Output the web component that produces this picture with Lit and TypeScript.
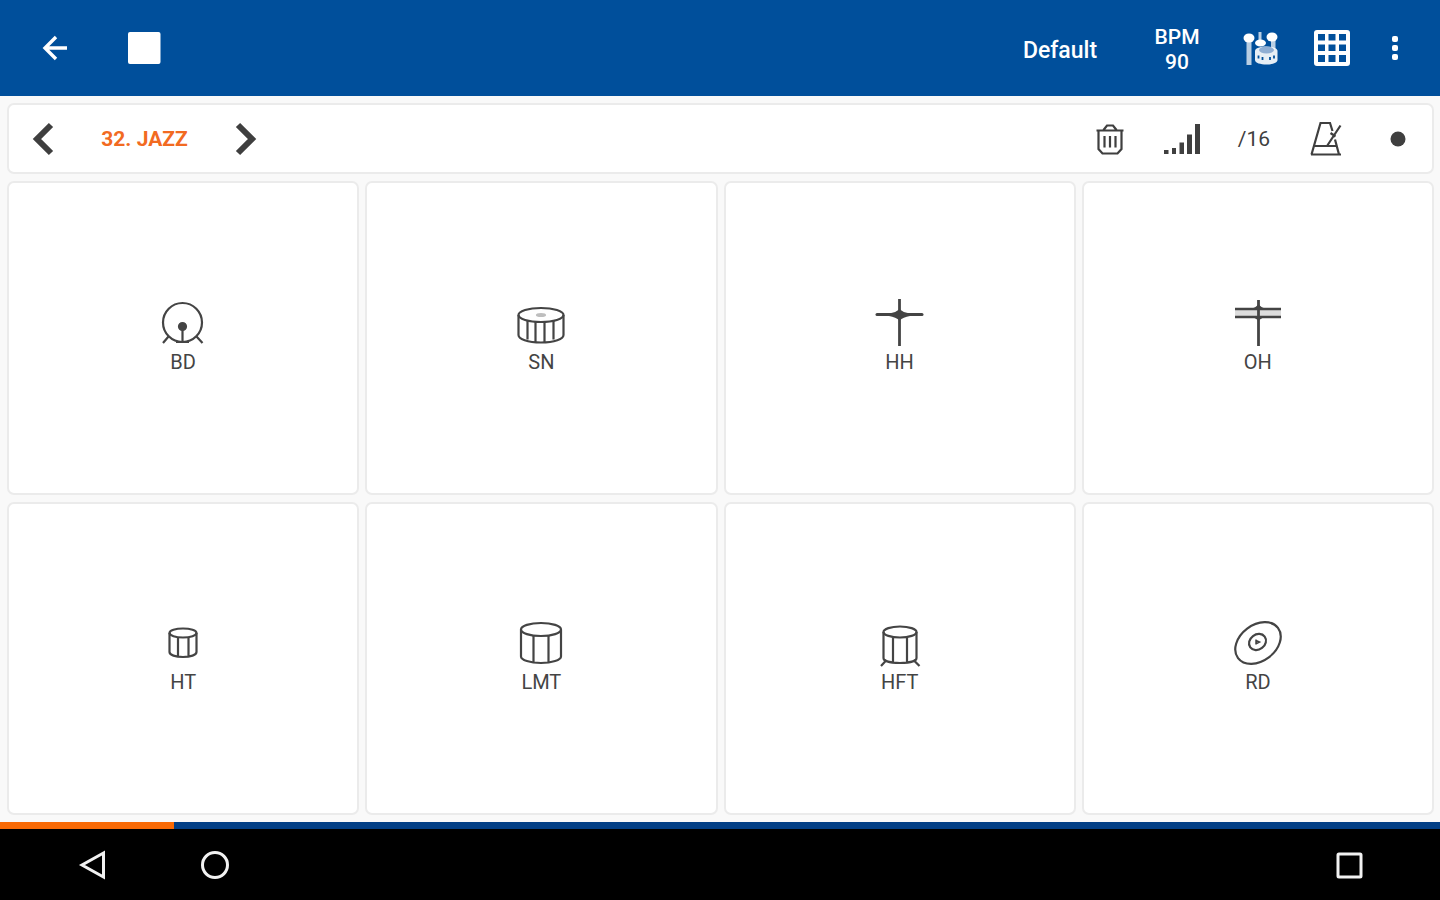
import { LitElement, html, svg, css } from "lit";
import { customElement, property, state } from "lit/decorators.js";

// Line drawings for the pads, each on a 48 x 48 canvas.
const drums: Record<string, unknown> = {
  BD: svg`
    <circle cx="23.500" cy="22.5" r="19.5"/>
    <path d="M9.500 36.500L4 43M37.500 36.500L43.500 43M17 42h13"/>
    <path d="M23.500 26v16"/><circle cx="23.500" cy="26.500" r="3.500" fill="currentColor"/>`,
  SN: svg`
    <ellipse cx="24" cy="15" rx="22.500" ry="7"/>
    <path d="M1.500 15v20c0 4 9 7.500 22.500 7.500s22.500-3.500 22.500-7.500V15"/>
    <path d="M10.500 20.500v19M18.500 22v20M27.500 22v20M36.500 20.500v19"/>
    <ellipse cx="24" cy="15" rx="4" ry="1" opacity=".35"/>`,
  HH: svg`
    <path d="M23.500 -1v47" stroke-width="2.800"/>
    <path d="M1 14.500h45" stroke-width="3" stroke-linecap="round"/>
    <path d="M13 13.500Q20 12.500 23.500 9Q27 12.500 34 13.500V16Q27 17 23.500 20.500Q20 17 13 16Z" fill="currentColor" stroke="none"/>`,
  OH: svg`
    <path d="M1 9h46v8H1z" fill="currentColor" opacity=".18" stroke="none"/>
    <path d="M24.500 0v46" stroke-width="2.800"/>
    <path d="M1 9h46M1 17h46" stroke-width="2.400"/>
    <path d="M16 9q6-1 8.500-5q2.500 4 8.500 5zM16 17q5 0 8.500 4q3.500-4 8.500-4z" fill="currentColor" stroke="none"/>`,
  HT: svg`
    <ellipse cx="24" cy="13" rx="13.500" ry="4.500"/>
    <path d="M10.500 13v19c0 3 6 5 13.500 5s13.500-2 13.500-5V13M19 17.500v19M29.500 17.500v19"/>`,
  LMT: svg`
    <ellipse cx="24" cy="9.500" rx="20" ry="6.500"/>
    <path d="M4 9.500v27c0 3.500 9 6.500 20 6.500s20-3 20-6.500v-27M16.500 15.500v27M31.500 15.500v27"/>`,
  HFT: svg`
    <ellipse cx="24" cy="12" rx="16.500" ry="5.500"/>
    <path d="M7.500 12v26c0 3 7 5 16.500 5s16.500-2 16.500-5V12M17 17.500v25M31 17.500v25"/>
    <path d="M10.500 40L5 46M37.500 40l6 6"/>`,
  RD: svg`
    <ellipse cx="24" cy="23" rx="25" ry="18" transform="rotate(-37 24 23)"/>
    <ellipse cx="23.500" cy="22" rx="9" ry="7.500" transform="rotate(-37 23.500 22)"/>
    <path d="M22 19.500v5M22 20.500l3.500 1.500l-3 1.500" stroke-width="1.500"/>`,
};

@customElement("drum-pad")
class DrumPad extends LitElement {
  @property() name = "";

  static styles = css`
    :host { display: flex; min-width: 0; }
    .pad {
      flex: 1;
      display: flex;
      flex-direction: column;
      align-items: center;
      justify-content: center;
      padding: 0;
      border: 2px solid #ebebeb;
      border-radius: 7px;
      background: #fff;
      color: #444;
      font: 400 20px/28px Roboto, sans-serif;
      cursor: pointer;
    }
    .icon {
      width: 48px;
      height: 48px;
      overflow: visible;
      fill: none;
      stroke: currentColor;
      stroke-width: 2.2;
    }
  `;

  render() {
    return html`<button class="pad">
      <svg class="icon" viewBox="0 0 48 48" aria-hidden="true">${drums[this.name]}</svg>
      <span>${this.name}</span>
    </button>`;
  }
}

@customElement("app-root")
class AppRoot extends LitElement {
  @state() private bpm = 90;
  @state() private position = 12.1;

  static styles = css`
    :host {
      display: flex;
      flex-direction: column;
      height: 100vh;
      background: #f9f9f9;
      font-family: Roboto, sans-serif;
    }
    button {
      display: flex;
      align-items: center;
      justify-content: center;
      height: 100%;
      padding: 0;
      border: 0;
      background: none;
      color: inherit;
      font: inherit;
      cursor: pointer;
    }
    svg { display: block; overflow: visible; }
    .spacer { flex: 1; }
    .appbar {
      display: flex;
      align-items: center;
      height: 96px;
      padding: 0 18px 0 10px;
      background: #004f9b;
      color: #fff;
      font-size: 23px;
      font-weight: 500;
    }
    .nav-action { width: 90px; }
    .kit, .tempo { padding-top: 4px; }
    .kit { width: 140px; }
    .tempo { width: 94px; font-size: 21px; line-height: 25px; }
    .action { width: 72px; }
    .overflow { width: 54px; }
    .stage {
      flex: 1;
      display: flex;
      flex-direction: column;
      gap: 7px;
      padding: 7px 6px 7px 7px;
    }
    .toolbar {
      display: flex;
      align-items: center;
      gap: 4px;
      height: 67px;
      border: 2px solid #ebebeb;
      border-radius: 7px;
      background: #fff;
      color: #3f3f3f;
      font-size: 21px;
    }
    .tool { width: 68px; }
    .pattern {
      min-width: 127px;
      color: #f26a21;
      font-weight: 700;
    }
    .pads {
      flex: 1;
      display: grid;
      grid-template-columns: repeat(4, 1fr);
      grid-auto-rows: 1fr;
      gap: 7px 6px;
    }
    .position {
      display: block;
      appearance: none;
      width: 100%;
      height: 7px;
      border: 0;
    }
    .position::-webkit-progress-bar { background: #023f86; }
    .position::-webkit-progress-value { background: #f96a05; }
    .system {
      display: flex;
      height: 71px;
      padding: 0 30px 0 32px;
      background: #000;
      color: #f2f2f2;
    }
    .key { width: 122px; }
    .line { fill: none; stroke: currentColor; }
    .solid { fill: currentColor; }
  `;

  render() {
    return html`
      <header class="appbar">
        <button class="nav-action" aria-label="Back">
          <svg class="line" width="26" height="26" viewBox="0 0 26 26" stroke-width="3.400">
            <path d="M14 2L3 13l11 11M3 13h22"/>
          </svg>
        </button>
        <button class="nav-action" aria-label="Stop">
          <svg class="solid" width="34" height="34" viewBox="0 0 34 34"><rect y="1" width="32.500" height="32" rx="2"/></svg>
        </button>
        <div class="spacer"></div>
        <button class="kit">Default</button>
        <button class="tempo">BPM<br>${this.bpm}</button>
        <button class="action" aria-label="Instruments">
          <svg class="solid" width="36" height="36" viewBox="0 0 36 36">
            <g opacity=".72"><path d="M4.500 9h5v26h-5zM16.500 2h3v9h-3zM29 9h4.500v10H29z"/></g>
            <ellipse cx="7" cy="8" rx="5.500" ry="4.500"/>
            <ellipse cx="18.500" cy="13" rx="5.500" ry="3.500"/>
            <ellipse cx="30" cy="7" rx="5.500" ry="4.500"/>
            <path d="M13 21c0-6 22.500-6 22.500 0v9c0 6-22.500 6-22.500 0z" opacity=".9"/>
            <ellipse cx="24.500" cy="20" rx="7.500" ry="3.500" fill="#8faed3"/>
            <path d="M16.500 25.500v3M20.500 27v3M28 27v3M32 25.500v3" stroke="#004f9b" stroke-width="1.800"/>
          </svg>
        </button>
        <button class="action" aria-label="Pattern grid">
          <svg class="solid" width="36" height="36" viewBox="0 0 36 36">
            <path fill-rule="evenodd" d="M3 0h30a3 3 0 0 1 3 3v30a3 3 0 0 1-3 3H3a3 3 0 0 1-3-3V3a3 3 0 0 1 3-3zM4 4v6.500h7V4zM14.500 4v6.500h7V4zM25 4v6.500h7V4zM4 14.500v6.500h7v-6.500zM14.500 14.500v6.500h7v-6.500zM25 14.500v6.500h7v-6.500zM4 25v7h7v-7zM14.500 25v7h7v-7zM25 25v7h7v-7z"/>
          </svg>
        </button>
        <button class="overflow" aria-label="More options">
          <svg class="solid" width="8" height="26" viewBox="0 0 8 26">
            <rect x="1" y="1" width="6" height="6" rx="2"/><rect x="1" y="10" width="6" height="6" rx="2"/><rect x="1" y="19" width="6" height="6" rx="2"/>
          </svg>
        </button>
      </header>

      <main class="stage">
        <div class="toolbar">
          <button class="tool" aria-label="Previous pattern">
            <svg class="line" width="22" height="32" viewBox="0 0 22 32" stroke-width="6"><path d="M19 2L5 16l14 14"/></svg>
          </button>
          <button class="pattern">32. JAZZ</button>
          <button class="tool" aria-label="Next pattern">
            <svg class="line" width="22" height="32" viewBox="0 0 22 32" stroke-width="6"><path d="M3 2l14 14L3 30"/></svg>
          </button>
          <div class="spacer"></div>
          <button class="tool" aria-label="Clear">
            <svg class="line" width="28" height="32" viewBox="0 0 28 32" stroke-width="2.200">
              <path d="M0.500 7.500h27M2.500 8v18l4 4.500h15l4-4.500V8M7.500 7l3.500-4.500h6L20.500 7"/>
              <path d="M8.500 13v11.500M14 13v11.500M19.500 13v11.500"/>
            </svg>
          </button>
          <button class="tool" aria-label="Velocity">
            <svg class="solid" width="36" height="32" viewBox="0 0 36 32">
              <path d="M0 27h4.500v4H0zM8 25h4v6H8zM15.500 19.500h4.500V31h-4.500zM23 11.500h5V31h-5zM31 1h5v30h-5z"/>
            </svg>
          </button>
          <button class="tool">/16</button>
          <button class="tool" aria-label="Metronome">
            <svg class="line" width="32" height="36" viewBox="0 0 32 36" stroke-width="2.200">
              <path d="M1.500 33.500L10.500 2h9.500l2.500 8M25 18.500L29 33.500M4 25h23M1 33.500h30M17 25L30.500 4.500M20.500 12l5 3.500"/>
            </svg>
          </button>
          <button class="tool" aria-label="Record">
            <svg class="solid" width="16" height="16" viewBox="0 0 16 16"><circle cx="8" cy="8" r="7.500"/></svg>
          </button>
        </div>
        <section class="pads" aria-label="Drum pads">
          ${Object.keys(drums).map((name) => html`<drum-pad name=${name}></drum-pad>`)}
        </section>
      </main>

      <progress class="position" aria-label="Playback position" max="100" .value=${this.position}></progress>

      <nav class="system" aria-label="System">
        <button class="key" aria-label="System back">
          <svg class="line" width="28" height="28" viewBox="0 0 28 28" stroke-width="3"><path d="M24.500 2v24L3 14z"/></svg>
        </button>
        <button class="key" aria-label="Home">
          <svg class="line" width="28" height="28" viewBox="0 0 28 28" stroke-width="3"><circle cx="14" cy="14" r="12.500"/></svg>
        </button>
        <div class="spacer"></div>
        <button class="key" aria-label="Recent apps">
          <svg class="line" width="28" height="28" viewBox="0 0 28 28" stroke-width="3"><rect x="3" y="3" width="23" height="23" rx="1"/></svg>
        </button>
      </nav>
    `;
  }
}
